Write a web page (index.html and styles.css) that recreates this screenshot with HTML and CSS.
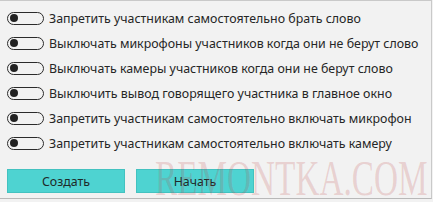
FILE: index.html
```html
<!DOCTYPE html>
<html lang="ru">
<head>
<meta charset="utf-8">
<link rel="stylesheet" href="styles.css">
</head>
<body>
<div class="panel">
  <ul class="options">
    <li class="opt"><span class="toggle"><span class="knob"></span></span><span class="label">Запретить участникам самостоятельно брать слово</span></li>
    <li class="opt"><span class="toggle"><span class="knob"></span></span><span class="label">Выключать микрофоны участников когда они не берут слово</span></li>
    <li class="opt"><span class="toggle"><span class="knob"></span></span><span class="label">Выключать камеры участников когда они не берут слово</span></li>
    <li class="opt"><span class="toggle"><span class="knob"></span></span><span class="label">Выключить вывод говорящего участника в главное окно</span></li>
    <li class="opt"><span class="toggle"><span class="knob"></span></span><span class="label">Запретить участникам самостоятельно включать микрофон</span></li>
    <li class="opt"><span class="toggle"><span class="knob"></span></span><span class="label">Запретить участникам самостоятельно включать камеру</span></li>
  </ul>
  <div class="actions">
    <button class="btn">Создать</button>
    <button class="btn">Начать</button>
  </div>
  <div class="watermark">REMONTKA.COM</div>
</div>
</body>
</html>
```
FILE: styles.css
```css
* { box-sizing: border-box; }
html, body { margin: 0; padding: 0; }
body {
  width: 433px;
  height: 202px;
  background: #f2f2f2;
  font-family: "Noto Sans", "Open Sans", sans-serif;
  overflow: hidden;
}
.panel {
  position: relative;
  width: 432px;
  height: 199px;
  background: #f2f2f2;
  border-top: 1px solid #c9c9c9;
  border-right: 1px solid #c9c9c9;
  border-bottom: 1px solid #b8b8b8;
  padding: 8px 0 0 7px;
  overflow: hidden;
}
.options {
  list-style: none;
  margin: 0;
  padding: 0;
  display: flex;
  flex-direction: column;
  gap: 7px;
}
.opt {
  display: flex;
  align-items: center;
  gap: 5px;
  height: 18px;
}
.toggle {
  width: 37px;
  height: 13px;
  border: 1.5px solid #2b2b2b;
  border-radius: 7px;
  display: flex;
  align-items: center;
  padding-left: 2px;
  flex: none;
}
.knob {
  width: 8px;
  height: 8px;
  border-radius: 50%;
  background: #222;
}
.label {
  font-size: 12.4px;
  color: #262626;
  white-space: nowrap;
}
.actions {
  display: flex;
  gap: 11px;
  margin-top: 17px;
}
.btn {
  width: 118px;
  height: 24px;
  background: #4ed3d1;
  border: 1px solid #43c2c0;
  font-family: "Noto Sans", "Open Sans", sans-serif;
  font-size: 12.4px;
  color: #1e2a2a;
  padding: 0;
}
.watermark {
  position: absolute;
  left: 155px;
  top: 152px;
  font-family: "Liberation Serif", serif;
  font-size: 50px;
  line-height: 50px;
  color: rgba(190, 70, 70, 0.2);
  white-space: nowrap;
  transform: scaleX(0.665);
  transform-origin: left top;
  pointer-events: none;
}
```
